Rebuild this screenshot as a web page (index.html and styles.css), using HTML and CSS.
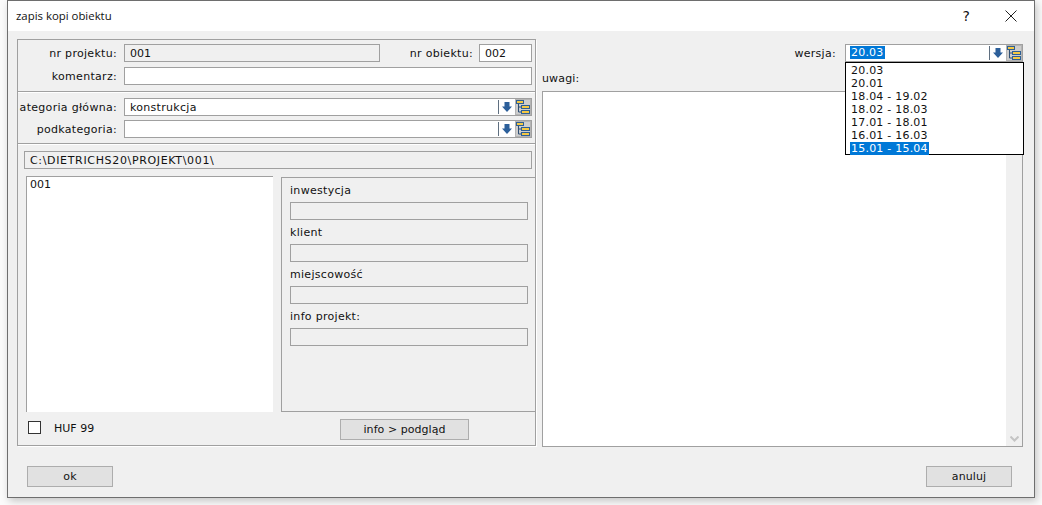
FILE: index.html
```html
<!DOCTYPE html>
<html lang="pl">
<head>
<meta charset="utf-8">
<title>zapis kopi obiektu</title>
<link rel="stylesheet" href="styles.css">
</head>
<body>
<svg class="defs" width="0" height="0" aria-hidden="true">
  <symbol id="arrow" viewBox="0 0 10 10">
    <path d="M2.500 0h5v4.500H10L5 10 0 4.500h2.500z" fill="#2c5f9a"/>
  </symbol>
  <symbol id="tree" viewBox="0 0 14 14">
    <path d="M2.500 3.500v8.500h3M2.500 7h3" fill="none" stroke="#2e4f74" stroke-width="1"/>
    <rect x="0.500" y="0.500" width="7" height="3" fill="#f5c842" stroke="#2e5f94" stroke-width="1"/>
    <rect x="5.500" y="5.500" width="8" height="3" fill="#f5c842" stroke="#2e5f94" stroke-width="1"/>
    <rect x="5.500" y="10.500" width="8" height="3" fill="#f5c842" stroke="#2e5f94" stroke-width="1"/>
  </symbol>
</svg>
<div class="window">
  <header class="titlebar">
    <span class="title">zapis kopi obiektu</span>
    <span class="help">?</span>
    <svg class="close" width="12" height="12" viewBox="0 0 12 12"><path d="M0.500 0.500l11 11M11.500 0.500l-11 11" stroke="#222" stroke-width="1" fill="none"/></svg>
  </header>
  <main class="content">
    <section class="left">
      <div class="sec sec-a">
        <div class="row">
          <label class="lbl">nr projektu:</label>
          <div class="field ro w-project num">001</div>
          <label class="lbl-obj">nr obiektu:</label>
          <div class="field w-obj num">002</div>
        </div>
        <div class="row">
          <label class="lbl">komentarz:</label>
          <div class="field grow"></div>
        </div>
      </div>
      <div class="sec sec-b">
        <div class="row">
          <label class="lbl">ategoria główna:</label>
          <div class="field grow combo"><span class="combo-text">konstrukcja</span><span class="sep"></span><svg class="arrow"><use href="#arrow"/></svg><span class="treebtn"><svg class="tree"><use href="#tree"/></svg></span></div>
        </div>
        <div class="row">
          <label class="lbl">podkategoria:</label>
          <div class="field grow combo"><span class="combo-text"></span><span class="sep"></span><svg class="arrow"><use href="#arrow"/></svg><span class="treebtn"><svg class="tree"><use href="#tree"/></svg></span></div>
        </div>
      </div>
      <div class="sec sec-c">
        <div class="field ro path">C:\DIETRICHS20\PROJEKT\001\</div>
      </div>
      <div class="lower">
        <div class="lower-main">
          <div class="list num">001</div>
          <div class="info">
            <div class="info-lbl">inwestycja</div>
            <div class="field ro"></div>
            <div class="info-lbl">klient</div>
            <div class="field ro"></div>
            <div class="info-lbl">miejscowość</div>
            <div class="field ro"></div>
            <div class="info-lbl">info projekt:</div>
            <div class="field ro"></div>
          </div>
        </div>
        <div class="lower-foot">
          <span class="check"></span>
          <span class="check-lbl">HUF 99</span>
          <button class="btn btn-info">info &gt; podgląd</button>
        </div>
      </div>
    </section>
    <section class="right">
      <div class="ver-row">
        <label class="lbl-ver">wersja:</label>
        <div class="field combo w-ver"><span class="combo-text"><span class="sel">20.03</span></span><span class="sep"></span><svg class="arrow"><use href="#arrow"/></svg><span class="treebtn"><svg class="tree"><use href="#tree"/></svg></span></div>
        <ul class="dropdown">
          <li>20.03</li>
          <li>20.01</li>
          <li>18.04 - 19.02</li>
          <li>18.02 - 18.03</li>
          <li>17.01 - 18.01</li>
          <li>16.01 - 16.03</li>
          <li><span class="sel">15.01 - 15.04</span></li>
        </ul>
      </div>
      <div class="uwagi-lbl">uwagi:</div>
      <div class="uwagi">
        <div class="scroll"><svg class="chev" width="9" height="6" viewBox="0 0 9 6"><path d="M0.500 0.500l4 4 4-4" fill="none" stroke="#c4c4c4" stroke-width="2"/></svg></div>
      </div>
    </section>
  </main>
  <footer class="foot">
    <button class="btn btn-foot">ok</button>
    <button class="btn btn-foot btn-cancel">anuluj</button>
  </footer>
</div>
</body>
</html>
```
FILE: styles.css
```css
* { box-sizing: border-box; }
html, body { margin: 0; height: 505px; overflow: hidden; }
body {
  background: #fbfbfb;
  font: 11px/18px "DejaVu Sans", Verdana, sans-serif;
  letter-spacing: .3px;
  color: #111;
  padding-left: 7px;
}
.defs { position: absolute; }
.num { letter-spacing: 0; }
.path { letter-spacing: .66px; }
.window {
  width: 1028px;
  height: 498px;
  background: #f0f0f0;
  border: 1px solid #6e6e6e;
  display: flex;
  flex-direction: column;
  box-shadow: 2px 3px 8px rgba(0,0,0,.22);
}
.titlebar {
  height: 30px;
  background: #fff;
  display: flex;
  align-items: center;
  padding: 0 17px 0 8px;
  flex: none;
}
.title { flex: 1; font: 11.4px/18px "Open Sans", sans-serif; letter-spacing: 0; }
.help { font-size: 14px; margin-right: 35px; letter-spacing: 0; }
.content {
  flex: 1;
  display: flex;
  padding: 8px 11px 0 9px;
  gap: 6px;
  min-height: 0;
}
.left {
  width: 519px;
  height: 407px;
  border: 1px solid #a0a0a0;
  box-shadow: 1px 1px 0 #fff;
  display: flex;
  flex-direction: column;
  flex: none;
}
.sec { border-bottom: 1px solid #a0a0a0; box-shadow: 0 1px 0 #fff; }
.sec-a { height: 52px; padding: 4px 3px 0 0; display: flex; flex-direction: column; gap: 5px; }
.sec-b { height: 52px; padding: 6px 3px 0 0; display: flex; flex-direction: column; gap: 4px; }
.sec-c { height: 32px; padding: 7px 3px 0 6px; border-bottom: 0; box-shadow: none; }
.row { display: flex; height: 18px; align-items: stretch; }
.lbl { width: 99px; line-height: 20px; text-align: right; flex: none; margin-right: 7px; white-space: nowrap; }
.lbl-obj { flex: 1; line-height: 20px; text-align: right; margin-right: 6px; white-space: nowrap; }
.field {
  height: 18px;
  border: 1px solid #a0a0a0;
  background: #fff;
  padding-left: 5px;
  line-height: 18px;
  white-space: nowrap;
}
.field.ro { background: #f0f0f0; }
.grow { flex: 1; }
.w-project { width: 256px; flex: none; }
.w-obj { width: 53px; flex: none; }
.combo { display: flex; align-items: center; padding-right: 0; line-height: 16px; }
.combo-text { flex: 1; padding-top: 1px; }
.sep { width: 1px; height: 14px; background: #5f6f80; margin-right: 3px; }
.arrow { width: 10px; height: 10px; margin-right: 3px; }
.treebtn {
  width: 16px;
  height: 16px;
  background: #cdcdcd;
  border: 1px solid #b5b5b5;
  display: flex;
  flex: none;
}
.tree { width: 14px; height: 14px; }
.lower { flex: 1; display: flex; flex-direction: column; min-height: 0; }
.lower-main { display: flex; height: 236px; flex: none; padding-left: 8px; }
.list {
  width: 247px;
  background: #fff;
  border-left: 1px solid #a0a0a0;
  border-top: 1px solid #a0a0a0;
  padding-left: 3px;
  line-height: 13px;
  padding-top: 1px;
}
.info {
  margin-left: 8px;
  flex: 1;
  margin-top: 1px;
  border-left: 1px solid #a0a0a0;
  border-top: 1px solid #a0a0a0;
  border-bottom: 1px solid #a0a0a0;
  padding: 4px 7px 0 8px;
}
.info-lbl { height: 20px; line-height: 18px; }
.info .field { height: 18px; margin-bottom: 4px; }
.lower-foot { flex: 1; display: flex; align-items: flex-start; padding: 7px 0 0 10px; }
.check {
  width: 13px;
  height: 13px;
  margin-top: 2px;
  border: 1px solid #333;
  background: #fff;
  flex: none;
}
.check-lbl { margin-left: 13px; margin-top: 1px; width: 286px; flex: none; letter-spacing: 0; }
.btn {
  font: inherit;
  letter-spacing: inherit;
  color: inherit;
  background: #e1e1e1;
  border: 1px solid #adadad;
  padding: 0;
  height: 21px;
  line-height: 19px;
}
.btn-info { width: 129px; letter-spacing: .05px; }
.right { flex: 1; display: flex; flex-direction: column; position: relative; min-width: 0; }
.ver-row { display: flex; height: 18px; margin-top: 5px; justify-content: flex-end; position: relative; }
.lbl-ver { margin-right: 9px; line-height: 19px; }
.w-ver { width: 178px; }
.sel { background: #0078d7; color: #fff; display: inline-block; line-height: 13px; padding: 0 1px; margin-left: -1px; }
.w-ver .combo-text { padding-top: 0; letter-spacing: .2px; }
.dropdown {
  position: absolute;
  top: 18px;
  right: -1px;
  width: 179px;
  height: 93px;
  margin: 0;
  padding: 1px 0 0 5px;
  list-style: none;
  background: #fff;
  border: 1px solid #000;
  z-index: 2;
  line-height: 13px;
  letter-spacing: .22px;
}
.uwagi-lbl { height: 29px; padding-top: 8px; line-height: 18px; flex: none; letter-spacing: .15px; }
.uwagi {
  height: 356px;
  background: #fff;
  border: 1px solid #a0a0a0;
  display: flex;
  justify-content: flex-end;
  flex: none;
}
.scroll {
  width: 16px;
  background: #f0f0f0;
  display: flex;
  align-items: flex-end;
  justify-content: center;
  padding-bottom: 4px;
}
.foot {
  flex: none;
  height: 51px;
  display: flex;
  justify-content: space-between;
  padding: 0 22px 0 19px;
  align-items: flex-start;
}
.btn-foot { width: 86px; margin-top: 20px; }
.btn-cancel { letter-spacing: .1px; }
```
